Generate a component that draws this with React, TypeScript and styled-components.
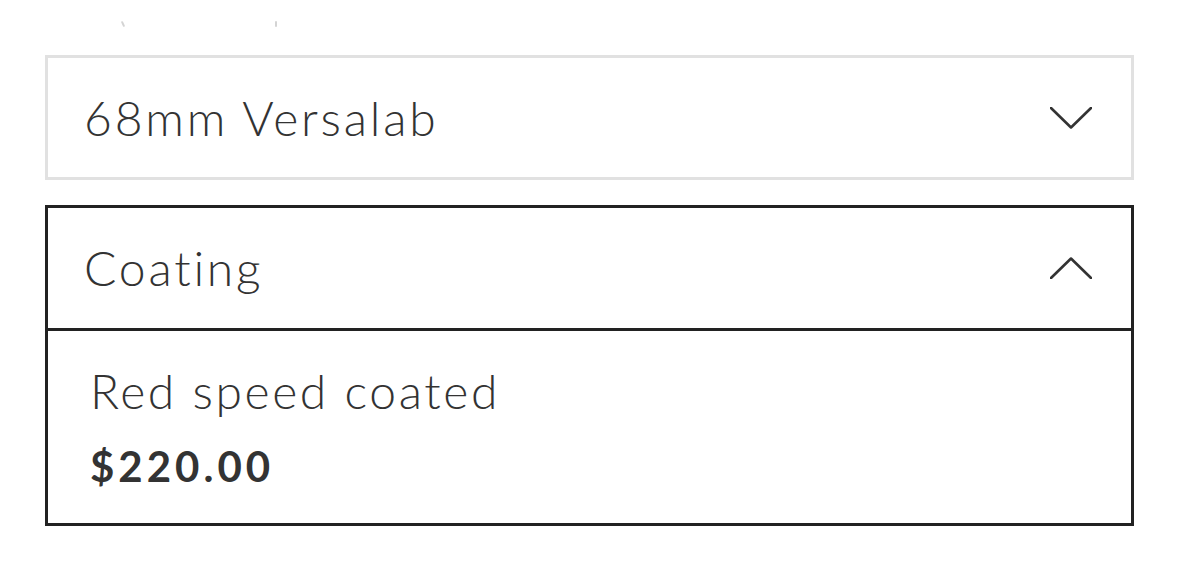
import React from "react";
import styled, { createGlobalStyle } from "styled-components";

const GlobalStyle = createGlobalStyle`
  html, body { margin: 0; padding: 0; background: #ffffff; }
  body {
    font-family: Lato, "Noto Sans", "Open Sans", sans-serif;
    color: #333333;
    -webkit-font-smoothing: antialiased;
  }
  * { box-sizing: border-box; }
`;

const Page = styled.div`
  width: 1179px;
  padding: 0 45px;
`;

const TopStrip = styled.div`
  height: 55px;
  display: flex;
  align-items: flex-start;
  padding-top: 21px;
`;

const Mark = styled.span<{ $gap: number; $tilt?: boolean }>`
  display: block;
  width: 2px;
  height: 6px;
  margin-left: ${(p) => p.$gap}px;
  background: #d4d4d4;
  border-radius: 1px;
  transform: ${(p) => (p.$tilt ? "rotate(-25deg)" : "none")};
`;

const Item = styled.section<{ $open?: boolean }>`
  border: 3px solid ${(p) => (p.$open ? "#222222" : "#e1e1e1")};
  margin-bottom: 25px;
  background: #ffffff;
`;

const Header = styled.div<{ $height: number }>`
  height: ${(p) => p.$height}px;
  display: flex;
  align-items: center;
  justify-content: space-between;
  padding: 0 39px 0 36px;
`;

const Title = styled.span`
  font-size: 48px;
  line-height: 58px;
  font-weight: 300;
  letter-spacing: 2.8px;
  color: #333333;
`;

const Divider = styled.div`
  height: 3px;
  background: #222222;
`;

const Body = styled.div`
  padding: 30px 42px 32px;
  display: flex;
  flex-direction: column;
  gap: 20px;
`;

const OptionName = styled.div`
  font-size: 48px;
  line-height: 60px;
  font-weight: 300;
  letter-spacing: 2.6px;
  color: #333333;
`;

const Price = styled.div`
  font-size: 42px;
  line-height: 50px;
  font-weight: 700;
  letter-spacing: 4px;
  color: #333333;
`;

const Chevron = ({ up }: { up?: boolean }) => (
  <svg width="42" height="22" viewBox="0 0 42 22" fill="none">
    <polyline
      points={up ? "1,21 21,1.5 41,21" : "1,1 21,20.5 41,1"}
      stroke="#333333"
      strokeWidth="2.6"
      strokeLinecap="round"
      strokeLinejoin="round"
    />
  </svg>
);

export default function App() {
  return (
    <>
      <GlobalStyle />
      <Page>
        <TopStrip>
          <Mark $gap={77} $tilt />
          <Mark $gap={151} />
        </TopStrip>
        <Item>
          <Header $height={119}>
            <Title>68mm Versalab</Title>
            <Chevron />
          </Header>
        </Item>
        <Item $open>
          <Header $height={120}>
            <Title>Coating</Title>
            <Chevron up />
          </Header>
          <Divider />
          <Body>
            <OptionName>Red speed coated</OptionName>
            <Price>$220.00</Price>
          </Body>
        </Item>
      </Page>
    </>
  );
}
